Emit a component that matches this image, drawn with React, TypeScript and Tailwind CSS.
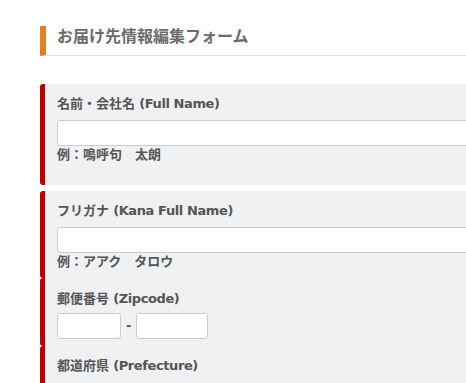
import React from "react";

const font = { fontFamily: '"DejaVu Sans", "Noto Sans CJK JP", sans-serif' };

function Label({ jp, en, className = "" }: { jp: string; en: string; className?: string }) {
  return (
    <div className={`text-[13px] leading-[20px] font-bold text-[#555] ${className}`}>
      {jp}
      <span className="tracking-[-0.4px]"> ({en})</span>
    </div>
  );
}

export default function App() {
  return (
    <div className="h-[383px] w-[466px] overflow-hidden bg-white" style={font}>
      <div className="pl-[40px] pt-[26px] w-[900px]">
        <h1 className="border-l-[6px] border-b border-l-[#e67e22] border-b-[#dcdcdc] pl-[11px] pb-[7px] text-[16px] leading-[22px] font-bold text-[#6b6b6b]">
          お届け先情報編集フォーム
        </h1>

        <div className="mt-[28px] rounded-[3px] border-l-[5px] border-l-[#bb0000] bg-[#f0f1f3] pl-[12px] pt-[10px] pb-[21px]">
          <Label jp="名前・会社名" en="Full Name" />
          <input
            type="text"
            className="mt-[6px] block h-[26px] w-[600px] rounded-[3px] border border-[#cccccc] bg-white"
          />
          <div className="text-[13px] leading-[18px] font-bold text-[#555]">例：鳴呼句　太朗</div>
        </div>

        <div className="mt-[6px] rounded-[3px] border-l-[5px] border-l-[#bb0000] bg-[#f0f1f3] pl-[12px] pt-[10px] pb-[7px]">
          <Label jp="フリガナ" en="Kana Full Name" />
          <input
            type="text"
            className="mt-[6px] block h-[26px] w-[600px] rounded-[3px] border border-[#cccccc] bg-white"
          />
          <div className="text-[13px] leading-[18px] font-bold text-[#555]">例：アアク　タロウ</div>
        </div>

        <div className="rounded-[3px] border-l-[5px] border-l-[#bb0000] bg-[#f0f1f3] pl-[12px] pt-[11px] pb-[7px]">
          <Label jp="郵便番号" en="Zipcode" />
          <div className="mt-[4px] flex items-center">
            <input
              type="text"
              className="block h-[26px] w-[64px] rounded-[3px] border border-[#cccccc] bg-white"
            />
            <span className="mx-[5px] text-[13px] font-bold leading-[20px] text-[#555]">-</span>
            <input
              type="text"
              className="block h-[26px] w-[72px] rounded-[3px] border border-[#cccccc] bg-white"
            />
          </div>
        </div>

        <div className="rounded-[3px] border-l-[5px] border-l-[#bb0000] bg-[#f0f1f3] pl-[12px] pt-[10px] pb-[30px]">
          <Label jp="都道府県" en="Prefecture" />
        </div>
      </div>
    </div>
  );
}
